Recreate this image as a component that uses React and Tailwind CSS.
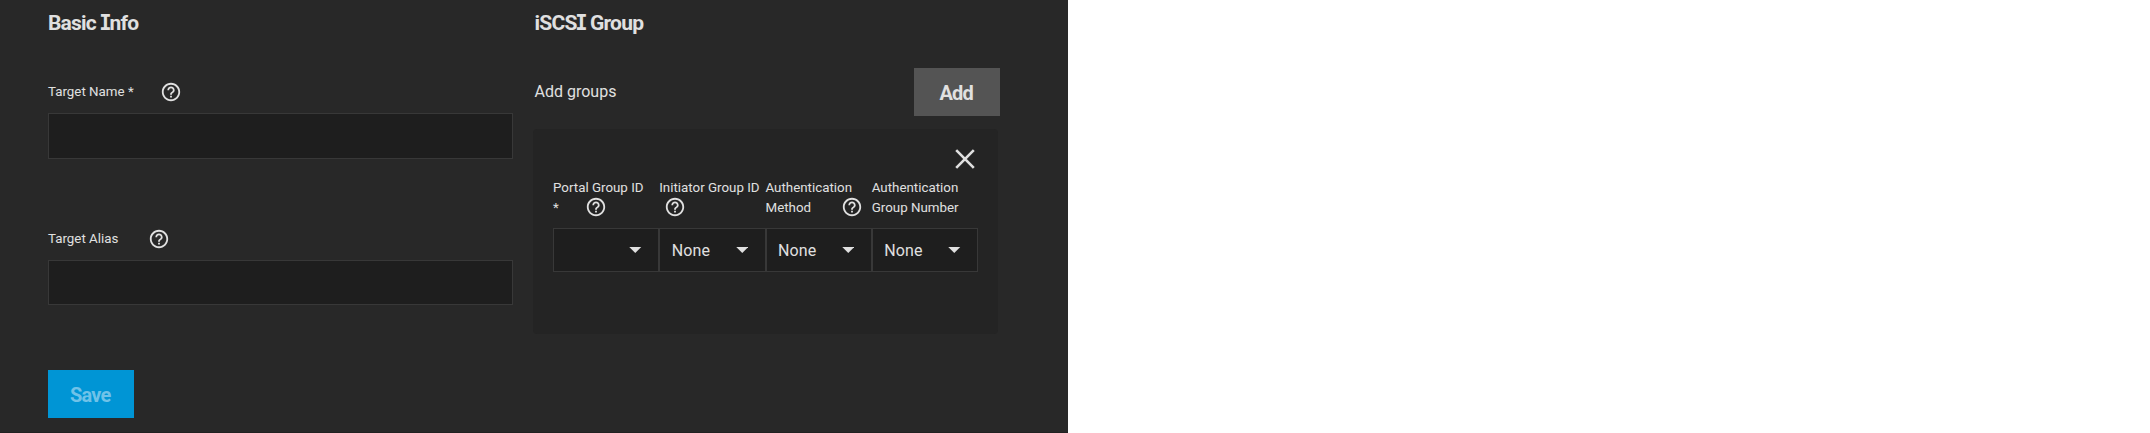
function HelpIcon({ className = "" }) {
  return (
    <svg viewBox="0 0 24 24" fill="currentColor" className={`size-[22px] shrink-0 ${className}`}>
      <path d="M11 18h2v-2h-2v2zm1-16C6.48 2 2 6.48 2 12s4.48 10 10 10 10-4.48 10-10S17.52 2 12 2zm0 18c-4.41 0-8-3.59-8-8s3.59-8 8-8 8 3.59 8 8-3.59 8-8 8zm0-14c-2.21 0-4 1.79-4 4h2c0-1.1.9-2 2-2s2 .9 2 2c0 2-3 1.75-3 5h2c0-2.25 3-2.5 3-5 0-2.21-1.79-4-4-4z" />
    </svg>
  );
}

const heading = "h-[46px] pt-[9px] text-[21px] leading-7 font-bold tracking-[-0.78px]";

// Capital I with serifs, used in headings
function SerifI() {
  return <span className="mr-[-1.4px] ml-[-1.2px] font-['DejaVu_Sans_Mono'] text-[20.5px]">I</span>;
}

function Select({ value = "" }) {
  return (
    <div className="flex h-11 items-center justify-between border border-[#383838] bg-[#1e1e1e] pr-[16.5px] pl-[11.5px] text-base">
      <span className="pt-[1px] tracking-[0.1px]">{value}</span>
      <svg viewBox="0 0 12 6" className="h-[6px] w-[12.5px]" fill="currentColor">
        <path d="M0 0h12L6 6z" />
      </svg>
    </div>
  );
}

function Column({ first, second, value }) {
  return (
    <div className="flex flex-col">
      <div className="h-[50px] text-[13.33px] leading-5 whitespace-nowrap">
        <div className="h-5">{first}</div>
        <div className="flex h-5 items-center">{second}</div>
      </div>
      <Select value={value} />
    </div>
  );
}

export default function App() {
  return (
    <div className="h-[433px] w-[2150px] overflow-hidden bg-white font-['Roboto',sans-serif] text-[#e0e0e0]">
      <div className="h-[433px] w-[1068px] border-b border-[#212121] bg-[#282828] pl-12">
        <div className="flex h-[370px]">
          <section className="w-[465px]">
            <h2 className={heading}>Basic <SerifI />nfo</h2>
            <div className="flex h-[67px] items-end pb-[10px] text-[13.33px]">
              <label className="w-[112px] pb-[1px]">Target Name *</label>
              <HelpIcon />
            </div>
            <input className="block h-[46px] w-full border border-[#383838] bg-[#1e1e1e]" />
            <div className="flex h-[101px] items-end pb-[10px] text-[13.33px]">
              <label className="w-[100px] pb-[1px]">Target Alias</label>
              <HelpIcon />
            </div>
            <input className="block h-[45px] w-full border border-[#383838] bg-[#1e1e1e]" />
          </section>
          <section className="ml-5 w-[467px]">
            <h2 className={`${heading} pl-[1.5px]`}>iSCS<SerifI /> Group</h2>
            <div className="mt-[22px] flex h-12 items-center justify-between pl-[1.5px]">
              <span className="text-base">Add groups</span>
              <button className="h-12 w-[86px] bg-[#545454] pt-[1px] pr-[1.5px] text-[20px] font-bold tracking-[-0.8px]">Add</button>
            </div>
            <div className="mt-[13px] h-[205px] w-[465px] rounded-sm bg-[#242424] pl-5">
              <div className="flex h-[49px] w-[425px] justify-end pt-5 pr-[3px]">
                <svg viewBox="0 0 20 20" className="size-5" fill="none" stroke="currentColor" strokeWidth="2.6">
                  <path d="M1.2 1.2 18.8 18.8M18.8 1.2 1.2 18.8" />
                </svg>
              </div>
              <div className="grid w-[425px] grid-cols-4">
                <Column first="Portal Group ID" second={<>*<HelpIcon className="mb-[3px] ml-[26.5px]" /></>} />
                <Column first="Initiator Group ID" second={<HelpIcon className="mb-[3px] ml-[5px]" />} value="None" />
                <Column first="Authentication" second={<><span className="w-[75.5px]">Method</span><HelpIcon className="mb-[3px]" /></>} value="None" />
                <Column first="Authentication" second="Group Number" value="None" />
              </div>
            </div>
          </section>
        </div>
        <button className="block h-12 w-[86px] bg-[#0095d5] pt-[1px] pr-[1.5px] text-[20px] font-bold tracking-[-0.8px] text-[#70c2e8]">Save</button>
      </div>
    </div>
  );
}
